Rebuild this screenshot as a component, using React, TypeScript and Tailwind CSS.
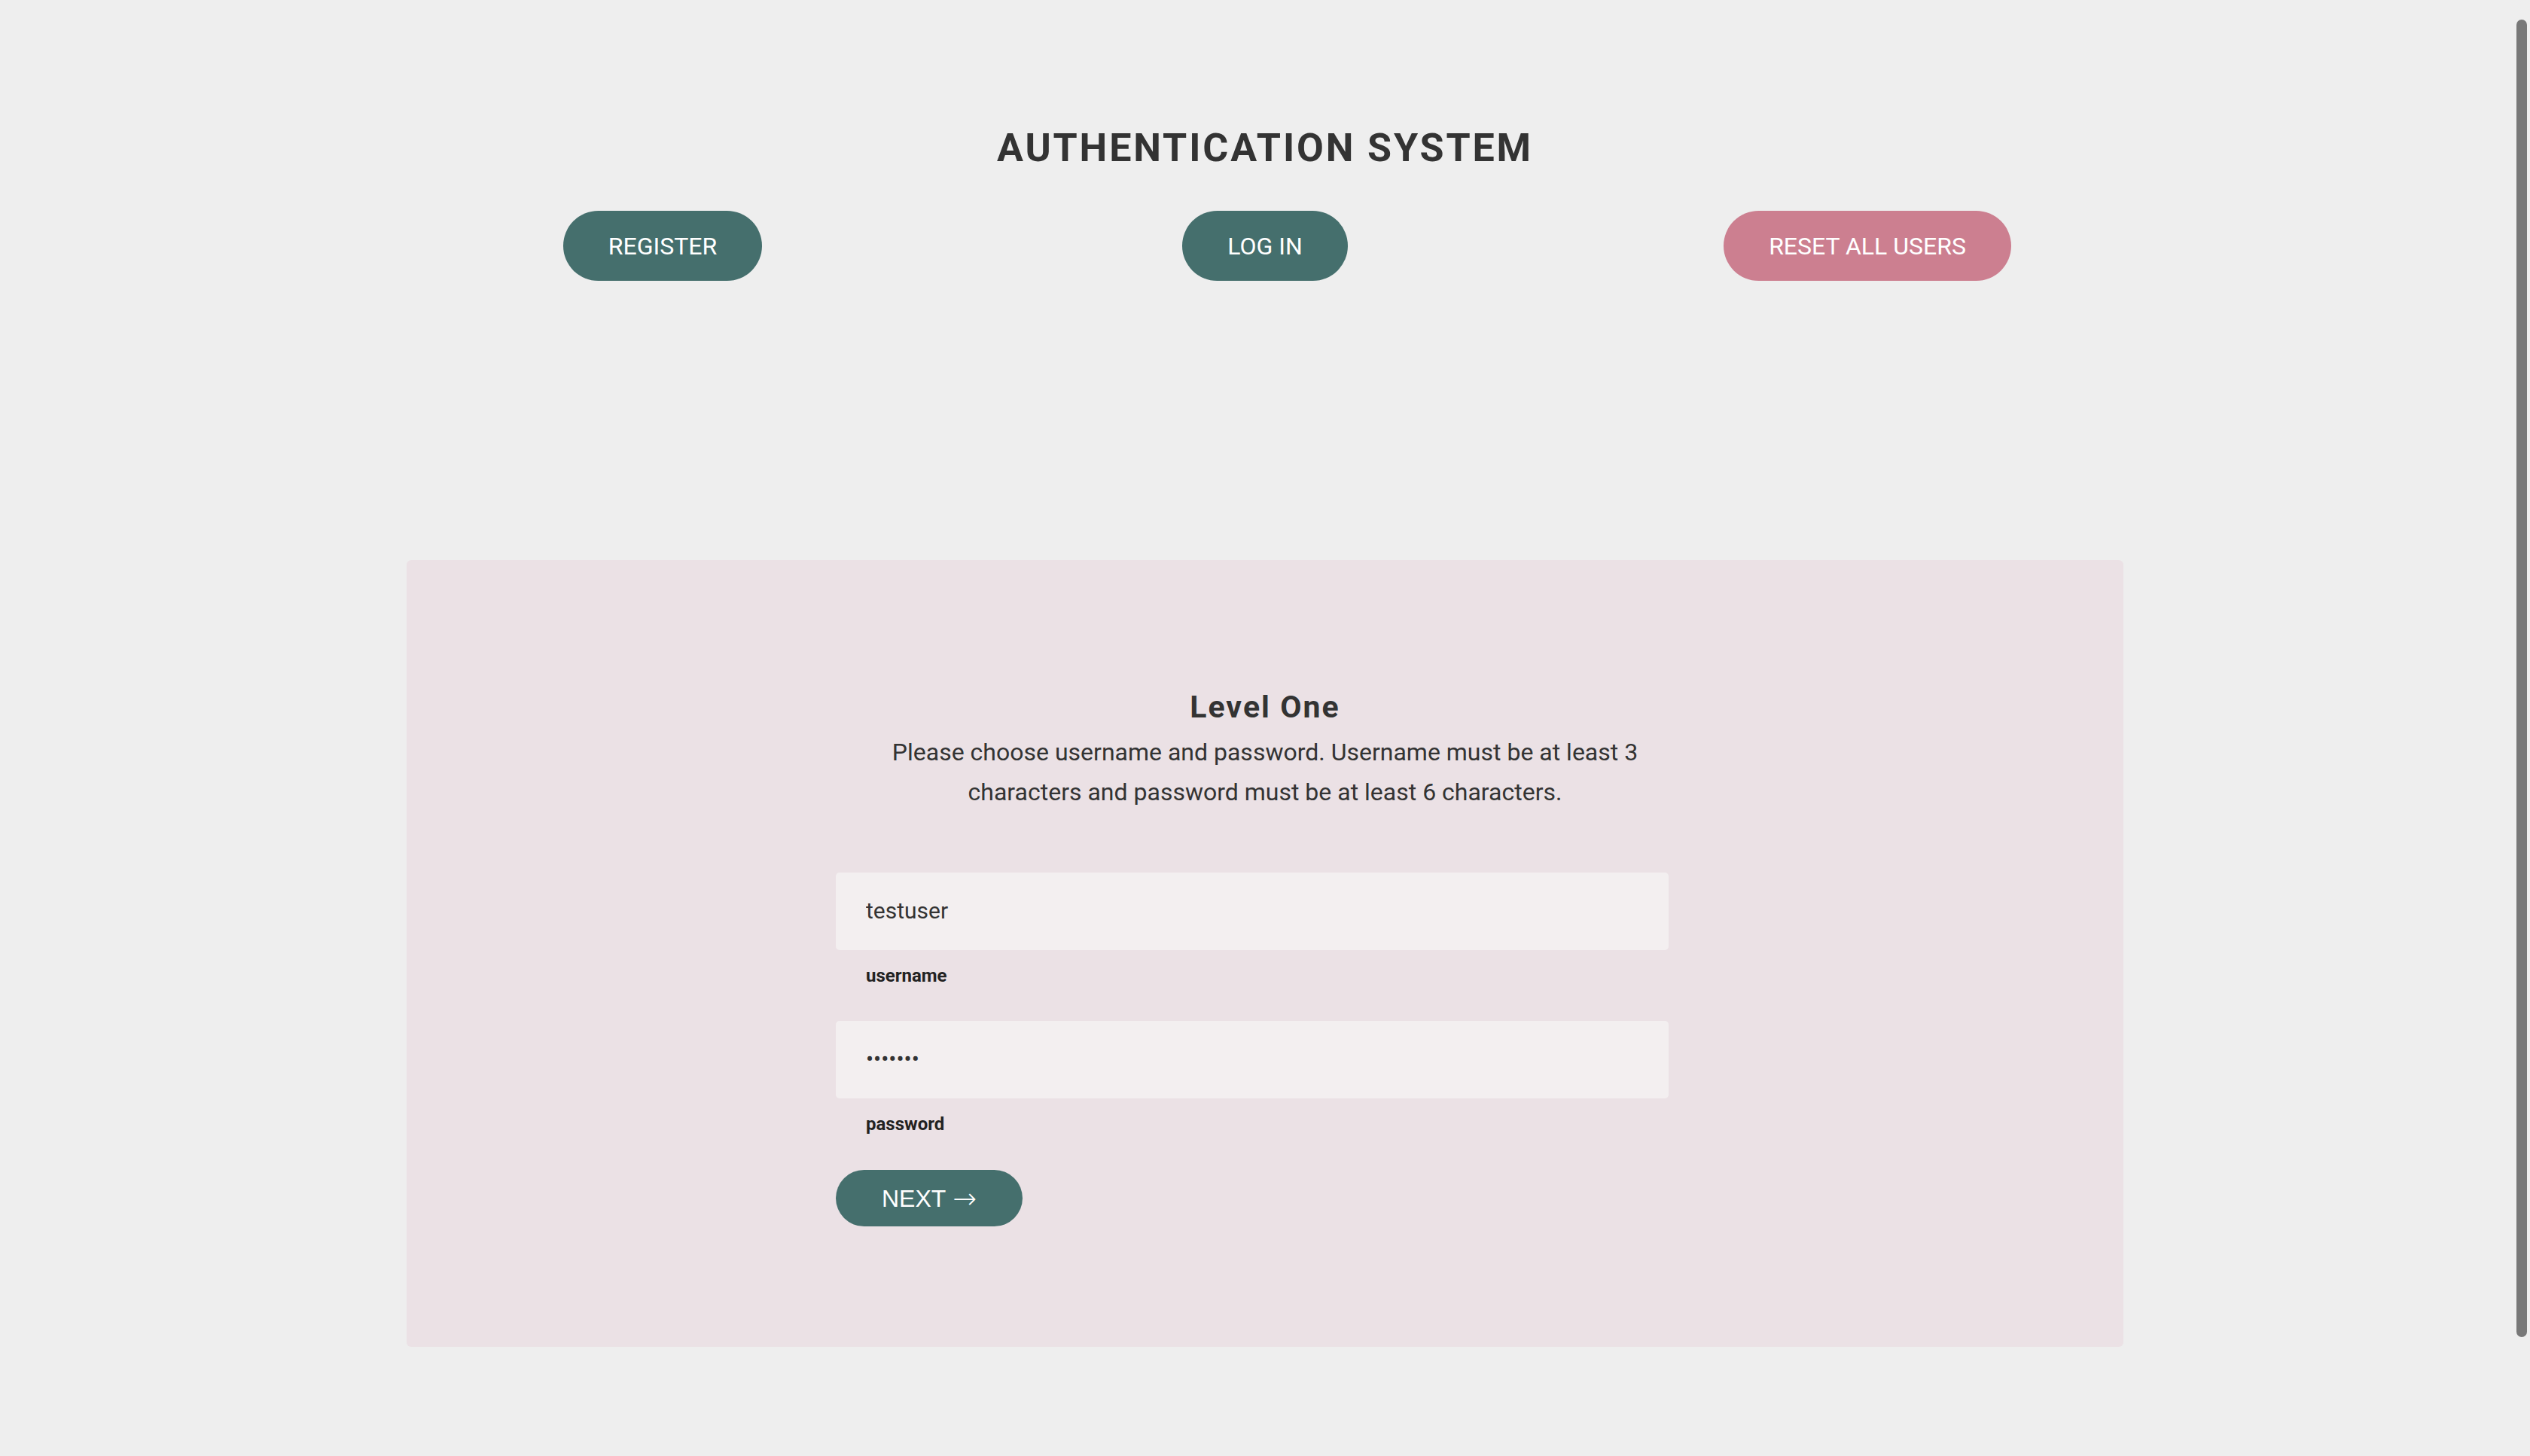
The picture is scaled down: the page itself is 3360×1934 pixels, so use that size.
const roboto = { fontFamily: "Roboto, 'Noto Sans', sans-serif" }

const topButtons = [
  { label: "REGISTER", color: "bg-[#456f6d]" },
  { label: "LOG IN", color: "bg-[#456f6d]" },
  { label: "RESET ALL USERS", color: "bg-[#cc7f90]" },
]

function Field({ type, value, label }: { type: string; value: string; label: string }) {
  return (
    <div className="flex flex-col">
      <input
        type={type}
        defaultValue={value}
        readOnly
        className="w-[1106px] h-[103px] rounded-[5px] bg-[#f3eff0] px-10 pb-[3px] text-[30px] text-[#333] outline-none font-['Roboto',sans-serif]"
      />
      <label className="mt-[19px] pl-10 text-[24px] leading-[30px] font-bold text-[#222]">{label}</label>
    </div>
  )
}

export default function App() {
  return (
    <div className="min-h-screen w-full bg-[#eeeeee] pb-[330px] text-[#333]" style={roboto}>
      {/* page scrollbar thumb */}
      <div className="fixed top-[26px] right-[4px] h-[1750px] w-[14px] rounded-full bg-[#787878]" />

      <h1 className="pt-[166px] text-center text-[52px] leading-[62px] font-bold tracking-[0.055em] text-[#333]">
        AUTHENTICATION SYSTEM
      </h1>

      <div className="mx-auto mt-[52px] grid w-[2400px] grid-cols-3">
        {topButtons.map((b) => (
          <div key={b.label} className="flex justify-center">
            <button
              className={`h-[93px] rounded-full px-[60px] text-[32px] text-white ${b.color}`}
              style={roboto}
            >
              {b.label}
            </button>
          </div>
        ))}
      </div>

      <section className="mx-auto mt-[371px] w-[2280px] rounded-md bg-[#ebe1e5] pt-[171px] pb-[160px]">
        <h2 className="text-center text-[41px] leading-[48px] font-bold tracking-[0.05em] text-[#333]">
          Level One
        </h2>
        <p className="mx-auto mt-[10px] w-[1110px] text-center text-[32px] leading-[53px] text-[#333]">
          Please choose username and password. Username must be at least 3 characters and password must be at least
          6 characters.
        </p>

        <form className="mx-auto mt-[80px] flex w-[1140px] flex-col">
          <Field type="text" value="testuser" label="username" />
          <div className="mt-[45px]">
            <Field type="password" value="1234567" label="password" />
          </div>
          <div className="mt-[46px]">
            <button
              type="button"
              className="flex h-[75px] items-center rounded-full bg-[#456f6d] px-[61px] text-[32px] text-white font-['Liberation_Sans',Arial,sans-serif]"
            >
              NEXT
              <span className="ml-[9px] font-['DejaVu_Sans',sans-serif] text-[38px] font-light leading-none">
                &rarr;
              </span>
            </button>
          </div>
        </form>
      </section>
    </div>
  )
}
